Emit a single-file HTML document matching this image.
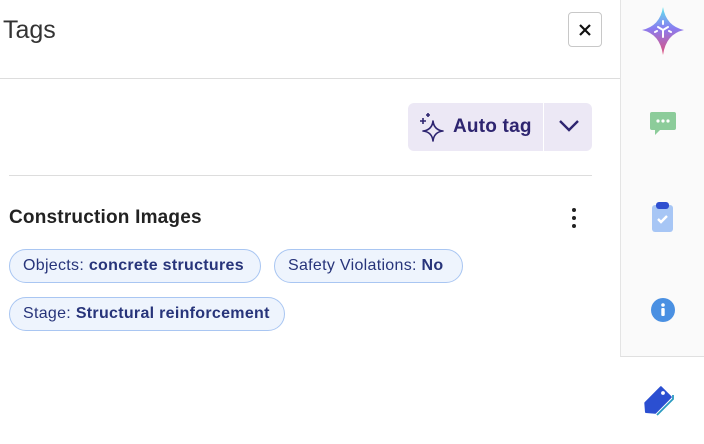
<!DOCTYPE html>
<html><head><meta charset="utf-8"><style>
*{box-sizing:border-box;margin:0;padding:0}
body{width:704px;height:444px;overflow:hidden;background:#fff;font-family:"Liberation Sans",sans-serif;position:relative}
.abs{position:absolute}
.chip{position:absolute;height:34px;border:1px solid #a9c6f2;background:#eef4fd;border-radius:17px;color:#27347a;font-size:16px;letter-spacing:0.3px;line-height:32px;padding-left:13px;white-space:nowrap}
.chip b{font-weight:bold}
</style></head><body>
<div class="abs" style="left:3px;top:16px;font-size:25px;color:#333;">Tags</div>
<div class="abs" style="left:568px;top:12px;width:34px;height:35px;border:1px solid #c8c8c8;border-radius:4px;"></div>
<svg class="abs" style="left:578px;top:23px" width="14" height="14"><path d="M2 2L12 12M12 2L2 12" stroke="#111" stroke-width="2.2"/></svg>
<div class="abs" style="left:0;top:78px;width:620px;height:1px;background:#ddd"></div>

<div class="abs" style="left:408px;top:103px;width:184px;height:48px;background:#ece8f5;border-radius:6px"></div>
<div class="abs" style="left:543px;top:103px;width:1px;height:48px;background:#fff"></div>
<svg class="abs" style="left:418px;top:112px" width="28" height="32" viewBox="0 0 28 32"><g fill="none" stroke="#2e2570" stroke-width="1.6" stroke-linejoin="round"><path d="M15 9Q16 18 25 19Q16 20 15 29Q14 20 5 19Q14 18 15 9Z"/><path d="M5 6v6M2 9h6"/><path d="M10 1v4M8 3h4"/></g></svg>
<div class="abs" style="left:453px;top:116px;font-size:19px;font-weight:bold;color:#2e2570;letter-spacing:0.2px">Auto tag</div>
<svg class="abs" style="left:558px;top:119px" width="22" height="14"><path d="M2 2L11 11L20 2" fill="none" stroke="#2e2570" stroke-width="2.4"/></svg>

<div class="abs" style="left:9px;top:175px;width:583px;height:1px;background:#ddd"></div>
<div class="abs" style="left:9px;top:207px;font-size:19px;font-weight:bold;color:#222;letter-spacing:0.2px">Construction Images</div>
<svg class="abs" style="left:570px;top:207px" width="8" height="22"><circle cx="4" cy="3" r="2" fill="#222"/><circle cx="4" cy="11" r="2" fill="#222"/><circle cx="4" cy="19" r="2" fill="#222"/></svg>

<div class="chip" style="left:9px;top:249px;width:252px">Objects: <b>concrete structures</b></div>
<div class="chip" style="left:274px;top:249px;width:189px">Safety Violations: <b>No</b></div>
<div class="chip" style="left:9px;top:297px;width:276px">Stage: <b>Structural reinforcement</b></div>

<div class="abs" style="left:620px;top:0;width:84px;height:357px;background:#fafafa;border-left:1px solid #e4e4e4;border-bottom:1px solid #e0e0e0"></div>
<svg class="abs" style="left:641px;top:6px" width="44" height="50" viewBox="0 0 44 50"><defs><linearGradient id="g" x1="0" y1="0" x2="0" y2="1"><stop offset="0" stop-color="#5fe6ee"/><stop offset=".45" stop-color="#8a7cf0"/><stop offset="1" stop-color="#e0507a"/></linearGradient></defs><path d="M22 1Q25 20 43 24Q25 28 22 49Q19 28 1 24Q19 20 22 1Z" fill="url(#g)"/><g stroke="#fff" stroke-width="2" stroke-linecap="round"><path d="M22 24v7M22 24l-5-3M22 24l5-3M22 15v3M14 26l2-1M30 26l-2-1"/></g></svg>
<svg class="abs" style="left:649px;top:110px" width="28" height="28"><path d="M3 2h22a2 2 0 0 1 2 2v14a2 2 0 0 1-2 2H11l-5 5v-5H3a2 2 0 0 1-2-2V4a2 2 0 0 1 2-2z" fill="#8ccc9a"/><circle cx="9" cy="11" r="1.6" fill="#fff"/><circle cx="14" cy="11" r="1.6" fill="#fff"/><circle cx="19" cy="11" r="1.6" fill="#fff"/></svg>
<svg class="abs" style="left:651px;top:201px" width="24" height="32"><rect x="1" y="4" width="21" height="27" rx="3" fill="#a7c6f5"/><rect x="5" y="1" width="13" height="7" rx="3" fill="#2e4fd0"/><path d="M7 18l3 3 6-6" fill="none" stroke="#fff" stroke-width="2.4"/></svg>
<svg class="abs" style="left:650px;top:297px" width="26" height="26"><circle cx="13" cy="13" r="12" fill="#4a90e2"/><circle cx="13" cy="8" r="1.8" fill="#fff"/><rect x="11.3" y="11" width="3.4" height="8" rx="1" fill="#fff"/></svg>
<svg class="abs" style="left:642px;top:382px" width="36" height="36" viewBox="0 0 36 36">
<path d="M15 33 L31 17 L31 13" fill="none" stroke="#2a9ac0" stroke-width="1.8"/>
<path d="M4 30 L3.3 20.9 L18.9 5.2 L28.8 15.1 L13.2 30.8 Z" fill="#2b4fd1" stroke="#2b4fd1" stroke-width="2" stroke-linejoin="round"/>
<circle cx="21" cy="11" r="1.9" fill="#fff"/>
</svg>
</body></html>
